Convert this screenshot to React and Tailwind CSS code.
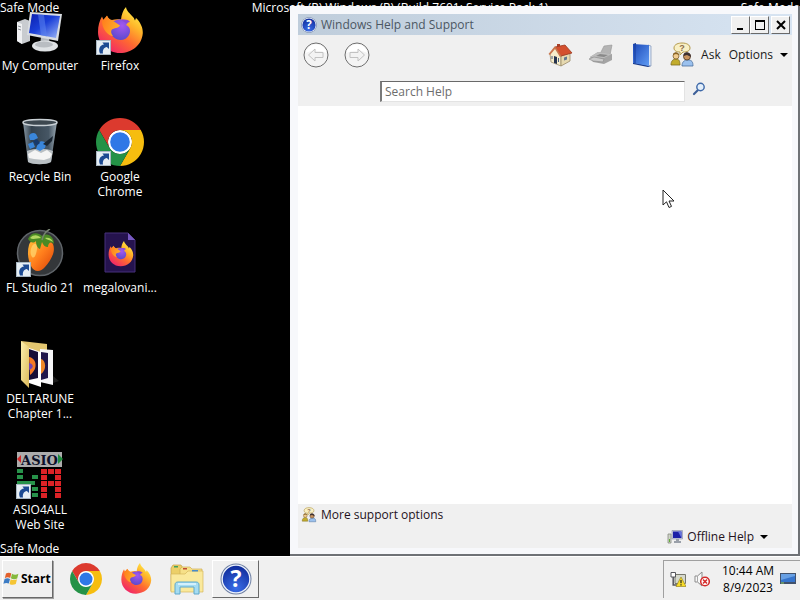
import React from "react";

function Gradients() {
  return (
    <svg className="absolute size-0" aria-hidden="true">
      <defs>
        <linearGradient id="fox" x1="0.85" y1="0.05" x2="0.2" y2="0.95">
          <stop offset="0" stopColor="#fff04a" />
          <stop offset="0.3" stopColor="#ffb52a" />
          <stop offset="0.6" stopColor="#ff6a30" />
          <stop offset="1" stopColor="#f0246a" />
        </linearGradient>
        <linearGradient id="foxArm" x1="0" y1="0" x2="1" y2="0.4">
          <stop offset="0" stopColor="#ff7a1c" />
          <stop offset="1" stopColor="#ffae2a" />
        </linearGradient>
        <radialGradient id="globe" cx="0.6" cy="0.3" r="0.8">
          <stop offset="0" stopColor="#a458f0" />
          <stop offset="1" stopColor="#5348c8" />
        </radialGradient>
        <linearGradient id="screen" x1="0" y1="0" x2="1" y2="1">
          <stop offset="0" stopColor="#0a1fae" />
          <stop offset="0.45" stopColor="#1a3fd8" />
          <stop offset="1" stopColor="#9db8f8" />
        </linearGradient>
        <radialGradient id="helpBlue" cx="0.5" cy="0.85" r="0.8">
          <stop offset="0" stopColor="#3a6ee8" />
          <stop offset="1" stopColor="#1230a0" />
        </radialGradient>
        <linearGradient id="glass" x1="0" y1="0" x2="1" y2="0">
          <stop offset="0" stopColor="#8797a3" />
          <stop offset="0.25" stopColor="#34424e" />
          <stop offset="0.75" stopColor="#465664" />
          <stop offset="1" stopColor="#9aa8b2" />
        </linearGradient>
        <linearGradient id="mango" x1="0" y1="0" x2="1" y2="1">
          <stop offset="0" stopColor="#ffc23a" />
          <stop offset="0.5" stopColor="#ff7e1c" />
          <stop offset="1" stopColor="#d94008" />
        </linearGradient>
        <linearGradient id="folder" x1="0" y1="0" x2="1" y2="1">
          <stop offset="0" stopColor="#fdf0ae" />
          <stop offset="1" stopColor="#dcb95a" />
        </linearGradient>
        <linearGradient id="book" x1="0" y1="0" x2="1" y2="1">
          <stop offset="0" stopColor="#1c48b8" />
          <stop offset="1" stopColor="#5f9cf4" />
        </linearGradient>
      </defs>
    </svg>
  );
}

function Shortcut() {
  return (
    <g>
      <rect x="0.5" y="33.5" width="14" height="14" fill="#e6eef4" stroke="#a9b7c2" />
      <path d="M4 46.500C2 42 4 38 8 37.600L6.400 35.400H13V42L10.800 40C8 40.600 6.400 42.600 7 46.500Z" fill="#1c4a92" />
    </g>
  );
}

function FirefoxShape() {
  return (
    <g>
      <path
        d="M30 0C30.500 4 34 6.500 37 10C38 11 38.500 12.500 39 13.500L40 11C44.500 15 47 21 46.800 26C46 38 36 46 24 46C11.500 46 2 36.500 2 25C2 19 3.500 13.500 6 9.500L7.500 13L11 8.500C12 11 13.500 12.500 16 13C19 12 22 12 25 12.500C25.500 8 27 3 30 0Z"
        fill="url(#fox)"
      />
      <path d="M14 20C15 14 22 11.500 28 13L32 15.500L30 18C34 19.500 35 24 33 28C31 32 26 34 21.500 32.500C17 31 13 26 14 20Z" fill="url(#globe)" />
      <path d="M6 14L11 9C12.500 12 15 13.500 18 14.500L24 18.500C22 21.500 18 21 16 22.500C14.500 24 15 27 17 29C12 29 6 22 6 14Z" fill="url(#foxArm)" />
      <path d="M25 13C29 12 32 12.500 34 15L30 16Z" fill="#8a48d8" />
    </g>
  );
}

function ChromeShape() {
  return (
    <g>
      <circle cx="24" cy="24" r="12" fill="#fff" />
      <path d="M24 12H44.780A24 24 0 0 0 3.217 12.003L13.608 30A12 12 0 0 1 24 12Z" fill="#dc3a2e" />
      <path d="M34.391 30.003L24 48A24 24 0 0 0 44.780 12.003H24A12 12 0 0 1 34.391 30.003Z" fill="#f6bd0f" />
      <path d="M13.609 30.003L3.218 12.006A24 24 0 0 0 24 48L34.393 30.003A12 12 0 0 1 13.609 30.003Z" fill="#249247" />
      <circle cx="24" cy="24" r="9.800" fill="#2f78e6" />
    </g>
  );
}

function ComputerIcon() {
  return (
    <svg viewBox="0 0 48 48" className="size-12">
      <path d="M1 15L9 12L14 14V34L6 37L1 34Z" fill="#c9ccd0" />
      <path d="M1 15L6 17V37L1 34Z" fill="#f0f1f3" />
      <path d="M2 19L5 20M2 22L5 23" stroke="#8a8f96" />
      <path d="M25 30L33 31L34 38H24Z" fill="#b4b8bd" />
      <ellipse cx="29" cy="39" rx="13" ry="5.500" fill="#dfe2e5" />
      <ellipse cx="28" cy="37.500" rx="9" ry="3" fill="#b9bdc2" />
      <path d="M14 5L46 7L42 34L11 28Z" fill="#d9dde2" />
      <path d="M16 7L44 9L40 31L13 26Z" fill="url(#screen)" />
      <path d="M22 7.500L28 8L31 29.500L25 28.300Z" fill="#5d85f0" opacity="0.55" />
    </svg>
  );
}

function RecycleIcon() {
  return (
    <svg viewBox="0 0 48 48" className="size-12">
      <path d="M7 4H41L35 44C30 47 17 47 12 44Z" fill="url(#glass)" />
      <path d="M11 33C18 30 30 30 37 33L35 44C30 47 17 47 12 44Z" fill="#b9bfc3" />
      <path d="M12 36L19 32L25 35L31 32L36 36L34 40L28 42L18 41L13 40Z" fill="#f4f4f4" />
      <ellipse cx="24" cy="4.500" rx="17" ry="3" fill="#3d4850" stroke="#c9d0d5" strokeWidth="1.500" />
      <path d="M13 18C14 15 18 14 20 16L22 20L18 22L14 22ZM22 25C25 22 29 23 30 26L29 30L24 33L20 31ZM12 26L17 24L19 29L14 31Z" fill="#3a86da" />
      <path d="M17 23L21 21L24 25L20 28Z" fill="#173a6c" />
      <path d="M27 26L37 18L36 23L31 28Z" fill="#1a2632" />
    </svg>
  );
}

function FirefoxIcon({ className, shortcut }) {
  return (
    <svg viewBox="0 0 48 48" className={className}>
      <FirefoxShape />
      {shortcut && <Shortcut />}
    </svg>
  );
}

function ChromeIcon({ className, shortcut }) {
  return (
    <svg viewBox="0 0 48 48" className={className}>
      <ChromeShape />
      {shortcut && <Shortcut />}
    </svg>
  );
}

function FlStudioIcon() {
  return (
    <svg viewBox="0 0 48 48" className="size-12">
      <circle cx="24" cy="24" r="22.500" fill="#34373a" stroke="#60656a" strokeWidth="1.500" />
      <path d="M13 16C15 8 31 7 37 15C40 23 35 31 29 38C24 44 18 43 15 37C12 31 11 23 13 16Z" fill="url(#mango)" />
      <path d="M16 17C19 13 22 15 21 20C20 27 18 30 16 28C14 25 14 21 16 17Z" fill="#ffda74" opacity="0.7" />
      <path d="M12 10C15 3 22 3 26 7C32 3 38 8 38 15C35 12 32 14 32 18C29 18 27 16 26 13L24 20C21 19 20 15 20 12C17 15 14 13 12 10Z" fill="#4a8a24" />
      <path d="M14 9C18 5 22 6 25 9C21 9 17 11 14 9ZM29 9C33 8 36 10 37 13C34 11 31 11 29 9Z" fill="#b2d860" />
      <path d="M26 11C27 6 30 2 34 0" stroke="#768270" strokeWidth="1.500" fill="none" />
      <Shortcut />
    </svg>
  );
}

function FirefoxFileIcon() {
  return (
    <svg viewBox="0 0 48 48" className="size-12">
      <path d="M9 4H32L39 11V43H9Z" fill="#25134e" stroke="#46307a" />
      <path d="M32 4V11H39Z" fill="#7658c0" />
      <g transform="translate(11.500 12) scale(0.550)">
        <FirefoxShape />
      </g>
    </svg>
  );
}

function FolderIcon() {
  return (
    <svg viewBox="0 0 48 48" className="size-12">
      <path d="M37 36L43 41L37 43Z" fill="#1c1c1c" />
      <path d="M5 1L31 4V38L12 42Z" fill="#e3c670" />
      <path d="M24 9L37 10V45L24 42Z" fill="#f6f6f8" />
      <path d="M25 12L32 13V38L25 40Z" fill="#20164c" />
      <path d="M25 19C30 20 31 30 25 34Z" fill="#f08828" />
      <path d="M13 8L25 12V47L13 43Z" fill="#fff" />
      <path d="M13 9L22 12V38L13 40Z" fill="#170f38" />
      <path d="M13 17C20 18 23 28 14 35Z" fill="#f47a24" />
      <path d="M13 23C18 24 18 28 13 30Z" fill="#7444b0" />
      <path d="M5 1L13 7V48L5 40Z" fill="url(#folder)" />
    </svg>
  );
}

const greenBlocks = [
  [0, 17], [0, 23], [0, 29], [6, 29], [12, 29], [15, 23], [15, 35], [15, 41],
];
const redBlocks = [
  [25, 17], [32, 17], [39, 17], [25, 23], [39, 23], [25, 29], [32, 29], [39, 29],
  [25, 35], [39, 35], [25, 41], [39, 41],
];

function AsioIcon() {
  return (
    <svg viewBox="0 0 48 48" className="size-12">
      <rect x="1" y="1" width="45" height="15" fill="#acacac" />
      <path d="M1 8L5 4V12Z" fill="#d42a2a" />
      <path d="M42 3L47 8L42 13Z" fill="#1f8c3c" />
      <text x="23.500" y="13.500" textAnchor="middle" fontFamily="DejaVu Serif, serif" fontWeight="700" fontSize="13" fill="#0b1028">
        ASIO
      </text>
      {greenBlocks.map(([x, y]) => (
        <rect key={`${x}-${y}`} x={x + 1} y={y + 1} width="6" height="4" fill="#27924a" />
      ))}
      {redBlocks.map(([x, y]) => (
        <rect key={`${x}-${y}`} x={x} y={y + 1} width="6" height="5" fill="#dc2226" />
      ))}
      <Shortcut />
    </svg>
  );
}

function HelpIcon({ className }) {
  return (
    <svg viewBox="0 0 32 32" className={className}>
      <circle cx="16" cy="16" r="15.500" fill="#6f80a4" />
      <circle cx="16" cy="16" r="14.500" fill="#eef3fc" />
      <circle cx="16" cy="16" r="13.200" fill="url(#helpBlue)" />
      <text x="16" y="24" textAnchor="middle" fontFamily="Open Sans, sans-serif" fontWeight="700" fontSize="23" fill="#fff">
        ?
      </text>
    </svg>
  );
}

function ArrowIcon({ flip }) {
  return (
    <svg viewBox="0 0 26 26" className="size-[26px]">
      <circle cx="13" cy="13" r="12" fill="#f4f4f4" stroke="#6e6e6e" />
      <path d="M2.500 11A10.700 10.700 0 0 1 23.500 11C17 8 9 8 2.500 11Z" fill="#fff" />
      <path
        d={flip ? "M20.500 13L14 7V10.500H6V15.500H14V19Z" : "M5.500 13L12 7V10.500H20V15.500H12V19Z"}
        fill="#f3f3f3"
        stroke="#c2c2c2"
      />
    </svg>
  );
}

function HomeIcon() {
  return (
    <svg viewBox="0 0 26 26" className="size-[26px]">
      <path d="M3 12L8 5L14 14V24L4 20Z" fill="#f6edcb" stroke="#a09070" strokeWidth="0.800" />
      <path d="M14 14L23 11V19L14 24Z" fill="#e6d9b0" stroke="#9a8a68" strokeWidth="0.800" />
      <path d="M10 2H13V6H10Z" fill="#a8402a" />
      <path d="M8 5L18 3L25 11L14 14Z" fill="#d4502e" stroke="#9c3820" strokeWidth="0.800" />
      <path d="M8 4L1.500 12L3 13L8 7L13 15L14.500 14Z" fill="#c9764e" />
      <path d="M7 14L10 15V22L7 21Z" fill="#26344e" />
      <path d="M5 14V17M11.500 16V20" stroke="#4a5f80" />
      <path d="M17 15.500L20 14.500V17.500L17 18.500Z" fill="#617790" />
    </svg>
  );
}

function PrinterIcon() {
  return (
    <svg viewBox="0 0 26 26" className="size-[26px]">
      <path d="M12 12L16 4L24 3L22 13Z" fill="#b4b4b4" stroke="#969696" strokeWidth="0.600" />
      <path d="M2 15L10 10L24 12V18L16 22L5 20Z" fill="#a4a4a4" />
      <path d="M2 15L10 10L24 12L16 16Z" fill="#bdbdbd" />
      <path d="M8 14L12 12L20 13L16 15Z" fill="#898989" />
      <path d="M1 17L6 15L16 17L15 20L5 19Z" fill="#cacaca" stroke="#8f8f8f" strokeWidth="0.700" />
    </svg>
  );
}

function BookIcon() {
  return (
    <svg viewBox="0 0 26 26" className="size-[26px]">
      <path d="M4 2L7 1V21L22 24L19 25L4 22Z" fill="#173888" />
      <path d="M19 3L22 4V24L19 23Z" fill="#dbe6f6" stroke="#6e86b0" strokeWidth="0.600" />
      <path d="M4 2L20 3V24L4 21Z" fill="url(#book)" />
      <path d="M6 2V21" stroke="#173c9c" />
    </svg>
  );
}

function AskIcon({ className }) {
  return (
    <svg viewBox="0 0 26 26" className={className}>
      <path d="M5 6C5 2 10 1 13 1C18 1 21 3 21 6C21 9 18 10 14 10L11 13V10C8 10 5 9 5 6Z" fill="#f8efc4" stroke="#b49a4c" />
      <text x="13" y="9" textAnchor="middle" fontFamily="Liberation Sans, sans-serif" fontWeight="700" fontSize="9" fill="#8a6c4c">
        ?
      </text>
      <path d="M2 23C2 19 4 17 7 17C10 17 11 19 11 23Z" fill="#c2ac2c" stroke="#7e6c20" strokeWidth="0.800" />
      <circle cx="7" cy="14" r="3" fill="#f0cc90" stroke="#80602c" strokeWidth="0.800" />
      <path d="M4 13C4 10 9 9 10 13L7 12Z" fill="#8a6424" />
      <path d="M13 24C13 20 15 18 19 18C23 18 24 20 24 24Z" fill="#9bc1ee" stroke="#4d709c" strokeWidth="0.800" />
      <circle cx="18" cy="14.500" r="3.500" fill="#c8935e" stroke="#4a3420" strokeWidth="0.800" />
      <path d="M14.500 14C14 9 22 9 22 15L18 13Z" fill="#3d3030" />
    </svg>
  );
}

function SearchIcon() {
  return (
    <svg viewBox="0 0 14 14" className="size-3.5">
      <path d="M2 12L6 8" stroke="#3d5f98" strokeWidth="2.200" strokeLinecap="round" />
      <circle cx="8.500" cy="5" r="3.700" fill="#e3effb" stroke="#3d68a8" strokeWidth="1.400" />
    </svg>
  );
}

function OfflineIcon() {
  return (
    <svg viewBox="0 0 16 16" className="size-4">
      <path d="M1 5H4V14H1Z" fill="#d0d4c8" stroke="#858a80" strokeWidth="0.800" />
      <path d="M2 10H3V13H2Z" fill="#5fae34" />
      <path d="M5 1.500H15.500V10H5Z" fill="#c9cee0" stroke="#888da4" strokeWidth="0.600" />
      <path d="M6 2.500H14.500V9H6Z" fill="#1c20a8" />
      <path d="M11 2.500H14.500V9Z" fill="#6674dc" />
      <path d="M9 10H12V12H14V14H7V12H9Z" fill="#9aa0aa" />
    </svg>
  );
}

function WindowsIcon() {
  return (
    <svg viewBox="0 0 16 16" className="size-4 shrink-0">
      <path d="M3 2.500C5 1.200 7 1.500 8.300 2.500L7.200 7C5.500 6 3.500 6 1.800 7.200Z" fill="#e2602c" />
      <path d="M9 2.800C11 4 13.200 4 15.400 2.800L14.200 7.400C12 8.500 9.700 8.400 7.900 7.300Z" fill="#86b93c" />
      <path d="M1.600 8C3.400 6.900 5.300 7 7 7.900L5.800 12.500C4.200 11.600 2.200 11.700 0.400 12.800Z" fill="#3d7cc4" />
      <path d="M7.700 8.200C9.600 9.300 11.800 9.400 14 8.300L12.800 13C10.700 14.100 8.400 14 6.500 12.900Z" fill="#f5c534" />
    </svg>
  );
}

function ExplorerIcon() {
  return (
    <svg viewBox="0 0 34 32" className="h-8 w-[34px]">
      <path d="M1 5L3 2H11L13 5H19V28H1Z" fill="#eccf68" stroke="#c4a24a" strokeWidth="0.700" />
      <path d="M10 6L12 4H20L22 6H32V28H10Z" fill="#f6e088" stroke="#cfae55" strokeWidth="0.700" />
      <path d="M1 11H15L18 8H33V29H1Z" fill="#fae99c" stroke="#d5b75c" strokeWidth="0.700" />
      <path d="M4 3H8V4.500H4Z" fill="#3fa05c" />
      <path d="M13 5H17V6.500H13Z" fill="#c04a34" />
      <path d="M22 7H28V8.500H22Z" fill="#4a8cc8" />
      <path d="M5 31V22C5 20 6 19 8 19H26C28 19 29 20 29 22V31H24V24H10V31Z" fill="#a5dcf2" stroke="#5fa8cc" />
      <path d="M8 21H26" stroke="#e4f7ff" strokeWidth="1.500" />
    </svg>
  );
}

function NetworkIcon() {
  return (
    <svg viewBox="0 0 16 16" className="size-4">
      <path d="M5 3.500H15.500V12.500H5Z" fill="#d5d8cc" stroke="#77786e" />
      <path d="M1 1.500H5.500V6H1Z" fill="#fff" stroke="#55565c" />
      <path d="M3.200 6V14H7" stroke="#55565c" strokeWidth="1.500" fill="none" />
      <path d="M11 6L16 15.500H6Z" fill="#f8dc28" stroke="#9c8820" strokeWidth="0.700" />
      <path d="M11 9V12.200M11 13.200V14.400" stroke="#222" strokeWidth="1.200" />
    </svg>
  );
}

function VolumeIcon() {
  return (
    <svg viewBox="0 0 16 16" className="size-4">
      <path d="M1 5H3.500L8 1V15L3.500 11H1Z" fill="#f8f8f8" stroke="#8b8b8b" />
      <path d="M3.500 5V11" stroke="#a9a9a9" />
      <circle cx="11" cy="10.500" r="4.300" fill="#fff" stroke="#d42a2a" strokeWidth="1.500" />
      <path d="M9 8.500L13 12.500M13 8.500L9 12.500" stroke="#d42a2a" strokeWidth="1.500" />
    </svg>
  );
}

function ShowDesktopIcon() {
  return (
    <svg viewBox="0 0 16 16" className="size-4">
      <path d="M0 2H16V13H0Z" fill="#42526c" />
      <path d="M1 3H15V11H1Z" fill="#3674cc" />
      <path d="M1 3H15V5L1 9Z" fill="#68a0e4" />
      <path d="M1 12H4" stroke="#8bd06a" />
    </svg>
  );
}

const desktopItems = [
  { label: "My Computer", icon: <ComputerIcon /> },
  { label: "Recycle Bin", icon: <RecycleIcon /> },
  { label: "FL Studio 21", icon: <FlStudioIcon /> },
  { label: "DELTARUNE Chapter 1...", icon: <FolderIcon /> },
  { label: "ASIO4ALL Web Site", icon: <AsioIcon /> },
  { label: "Firefox", icon: <FirefoxIcon className="size-12" shortcut /> },
  { label: "Google Chrome", icon: <ChromeIcon className="size-12" shortcut /> },
  { label: "megalovani...", icon: <FirefoxFileIcon /> },
];

function Desktop() {
  return (
    <ul className="grid w-40 grid-flow-col grid-cols-2 grid-rows-[repeat(4,111px)_auto] pt-[7px] text-white">
      {desktopItems.map((item) => (
        <li key={item.label}>
          <button type="button" className="flex w-full flex-col items-center gap-[3px] text-center leading-[15px]">
            {item.icon}
            <span>{item.label}</span>
          </button>
        </li>
      ))}
    </ul>
  );
}

function Caret() {
  return (
    <svg viewBox="0 0 8 4" className="h-1 w-2">
      <path d="M0 0H8L4 4Z" fill="#000" />
    </svg>
  );
}

function CaptionButton({ label, children }) {
  return (
    <button
      type="button"
      aria-label={label}
      className="flex h-[18px] w-[19px] items-center justify-center border border-t-white border-l-white border-r-[#696969] border-b-[#696969] bg-[#f0f0f0]"
    >
      <svg viewBox="0 0 12 12" className="size-3">
        {children}
      </svg>
    </button>
  );
}

function HelpWindow() {
  return (
    <section
      aria-label="Windows Help and Support"
      className="absolute top-1.5 right-0 bottom-0 left-[290px] flex flex-col border-r-2 border-b-2 border-[#6f7276] bg-[#f7f8fb] p-2 pr-1.5 pb-1.5"
    >
      <header className="flex h-[21px] shrink-0 items-center bg-linear-to-r from-[#bfcddb] to-[#d7e4f2] pr-0.5 pl-[3px]">
        <HelpIcon className="mr-1 size-4" />
        <h1 className="flex-1 text-[#4c5763]">Windows Help and Support</h1>
        <CaptionButton label="Minimize">
          <path d="M2 9H8V11H2Z" />
        </CaptionButton>
        <CaptionButton label="Maximize">
          <path d="M1 1H11V11H1ZM2 3V10H10V3Z" fillRule="evenodd" />
        </CaptionButton>
        <span className="w-0.5" />
        <CaptionButton label="Close">
          <path d="M2 2L10 10M10 2L2 10" stroke="#000" strokeWidth="2" />
        </CaptionButton>
      </header>

      <div className="shrink-0 bg-[#f0f0f0]">
        <nav className="flex h-10 items-center pr-1 pl-[5px]">
          <button type="button" aria-label="Back">
            <ArrowIcon />
          </button>
          <button type="button" aria-label="Forward" className="ml-[15px]">
            <ArrowIcon flip />
          </button>
          <div className="ml-auto flex items-center gap-[15px]">
            <button type="button" aria-label="Home">
              <HomeIcon />
            </button>
            <button type="button" aria-label="Print">
              <PrinterIcon />
            </button>
            <button type="button" aria-label="Browse Help">
              <BookIcon />
            </button>
          </div>
          <button type="button" className="ml-3.5 flex items-center gap-1.5">
            <AskIcon className="size-[26px]" />
            Ask
          </button>
          <button type="button" className="ml-2 flex items-center gap-[7px]">
            Options
            <Caret />
          </button>
        </nav>
        <form className="flex items-start pt-1.5 pr-[86px] pb-1 pl-[82px]">
          <input
            type="text"
            aria-label="Search Help"
            placeholder="Search Help"
            className="h-[21px] min-w-0 flex-1 border border-t-[#696969] border-l-2 border-l-[#7a7a7a] border-r-[#e3e3e3] border-b-[#e3e3e3] bg-white px-[3px] placeholder:text-[#6d6d6d]"
          />
          <button type="button" aria-label="Search" className="ml-[7px] pt-px">
            <SearchIcon />
          </button>
        </form>
      </div>

      <main className="flex-1 bg-white" />

      <footer className="flex h-11 shrink-0 flex-col justify-between bg-[#f0f0f0] pb-0.5 pl-[3px]">
        <a href="#support" className="flex items-center gap-1 self-start pt-0.5 leading-[18px] text-[#24121c]">
          <AskIcon className="size-4" />
          More support options
        </a>
        <button type="button" className="mr-6 flex items-center gap-1 self-end leading-[18px] text-[#24121c]">
          <OfflineIcon />
          Offline Help
          <span className="ml-0.5">
            <Caret />
          </span>
        </button>
      </footer>
    </section>
  );
}

function Taskbar() {
  return (
    <footer className="flex h-11 shrink-0 items-center border-t border-white bg-[#f0f0f0] pl-0.5 text-black">
      <button
        type="button"
        className="flex h-[38px] w-[51px] items-center gap-0.5 border border-t-white border-l-white border-r-[#696969] border-b-[#696969] font-bold shadow-[1px_1px_0_#a0a0a0]"
      >
        <WindowsIcon />
        Start
      </button>
      <div className="ml-[17px] flex items-center gap-[18px]">
        <button type="button" aria-label="Google Chrome">
          <ChromeIcon className="size-8" />
        </button>
        <button type="button" aria-label="Firefox">
          <FirefoxIcon className="size-8" />
        </button>
        <button type="button" aria-label="Windows Explorer">
          <ExplorerIcon />
        </button>
      </div>
      <button
        type="button"
        aria-label="Windows Help and Support"
        className="ml-2 flex h-[38px] w-[47px] items-center justify-center border border-t-white border-l-white border-r-[#696969] border-b-[#696969] bg-[#f0f0f0]"
      >
        <HelpIcon className="size-8" />
      </button>
      <div className="ml-auto flex h-[38px] items-center border-t border-l border-[#a0a0a0] pr-1 pl-1.5">
        <NetworkIcon />
        <span className="ml-2">
          <VolumeIcon />
        </span>
        <time dateTime="2023-08-09T10:44" className="ml-2 flex w-[60px] flex-col items-center leading-[17px] whitespace-nowrap">
          <span>10:44 AM</span>
          <span>8/9/2023</span>
        </time>
        <button type="button" aria-label="Show desktop" className="ml-0.5">
          <ShowDesktopIcon />
        </button>
      </div>
    </footer>
  );
}

export default function App() {
  return (
    <div className="flex min-h-screen flex-col bg-black font-['Open_Sans','Noto_Sans',sans-serif] text-xs text-[#1a1a1a]">
      <Gradients />
      <div className="relative flex-1 overflow-hidden">
        <Desktop />
        <p className="absolute top-0 left-0 leading-[15px] text-white">Safe Mode</p>
        <p className="absolute inset-x-0 top-0 text-center leading-[15px] text-white">
          Microsoft (R) Windows (R) (Build 7601: Service Pack 1)
        </p>
        <p className="absolute top-0 right-0 leading-[15px] text-white">Safe Mode</p>
        <p className="absolute bottom-0 left-0 leading-[15px] text-white">Safe Mode</p>
        <HelpWindow />
        <svg viewBox="0 0 13 20" className="absolute top-[189px] left-[662px] h-5 w-[13px]">
          <path d="M1 1V16L4.500 12.800L7 18.500L9.500 17.400L7 12H12Z" fill="#fff" stroke="#222" />
        </svg>
      </div>
      <Taskbar />
    </div>
  );
}
